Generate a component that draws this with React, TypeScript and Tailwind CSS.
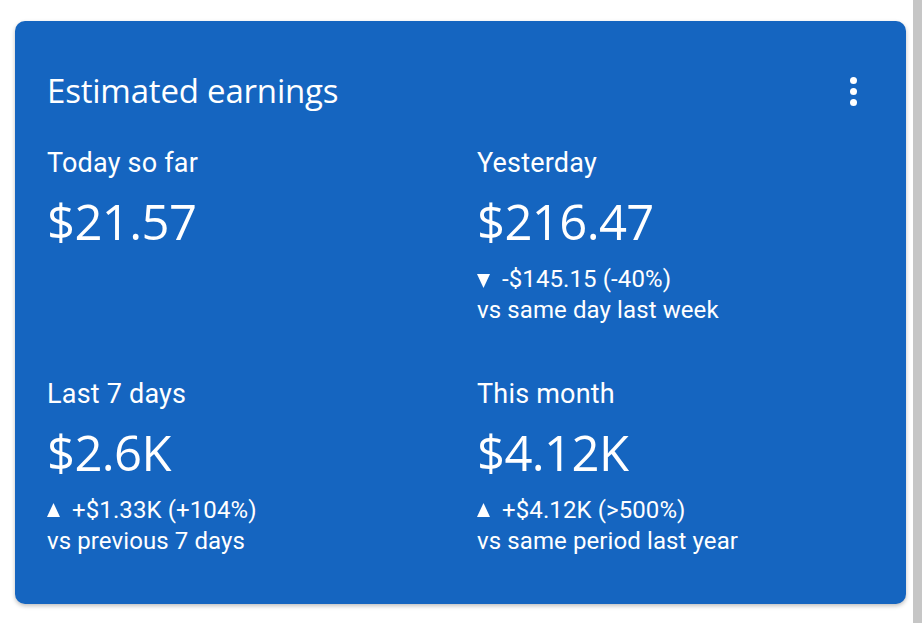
import React from "react";

const sans = "font-['Roboto','Liberation_Sans',sans-serif]";
const display = "font-['Open_Sans','Roboto',sans-serif]";

type Stat = {
  label: string;
  value: string;
  up?: boolean;
  delta?: string;
  compare?: string;
};

const stats: Stat[] = [
  { label: "Today so far", value: "$21.57" },
  {
    label: "Yesterday",
    value: "$216.47",
    up: false,
    delta: "-$145.15 (-40%)",
    compare: "vs same day last week",
  },
  {
    label: "Last 7 days",
    value: "$2.6K",
    up: true,
    delta: "+$1.33K (+104%)",
    compare: "vs previous 7 days",
  },
  {
    label: "This month",
    value: "$4.12K",
    up: true,
    delta: "+$4.12K (>500%)",
    compare: "vs same period last year",
  },
];

// small filled triangle, points up or down
const Arrow = ({ up }: { up?: boolean }) => (
  <span className="flex w-[14px] justify-start">
    <svg width="13" height="14" viewBox="0 0 13 14" className={up ? "" : "translate-y-[2px]"}>
      {up ? <polygon points="6.5,0 13,14 0,14" fill="white" /> : <polygon points="0,0 13,0 6.5,14" fill="white" />}
    </svg>
  </span>
);

const StatBlock = ({ stat }: { stat: Stat }) => (
  <div className="flex flex-col">
    <div className={`${sans} text-[27px] leading-[32px] tracking-[0.2px]`}>{stat.label}</div>
    <div className={`${display} mt-[14px] text-[49px] leading-[56px] tracking-[-0.6px]`}>
      {stat.value}
    </div>
    {stat.delta && (
      <div className={`${sans} mt-[14px] text-[24px] leading-[32px] tracking-[0.1px]`}>
        <div className="flex items-center gap-[11px]">
          <Arrow up={stat.up} />
          <span>{stat.delta}</span>
        </div>
        <div className="-mt-[1px]">{stat.compare}</div>
      </div>
    )}
  </div>
);

const App = () => {
  return (
    <div className="flex h-[623px] w-[922px] bg-white">
      <div className="flex-1 pl-[15px] pr-[7px] pt-[21px]">
        <div className="h-[583px] rounded-[10px] bg-[#1565c0] pl-[32px] pr-[40px] pt-[50px] text-white shadow-[0_2px_4px_rgba(0,0,0,0.25)]">
          <div className="flex items-center justify-between">
            <h1 className={`${display} text-[33px] leading-[40px] tracking-[-0.2px]`}>
              Estimated earnings
            </h1>
            <div className="flex flex-col items-center gap-[4px] pr-[9px]">
              <span className="h-[7px] w-[7px] rounded-full bg-white" />
              <span className="h-[7px] w-[7px] rounded-full bg-white" />
              <span className="h-[7px] w-[7px] rounded-full bg-white" />
            </div>
          </div>
          <div className="mt-[36px] grid grid-cols-[430px_1fr] gap-y-[52px]">
            {stats.map((s) => (
              <StatBlock key={s.label} stat={s} />
            ))}
          </div>
        </div>
      </div>
      <div className="w-[9px] bg-[#c6c6c6]" />
    </div>
  );
};

export default App;
